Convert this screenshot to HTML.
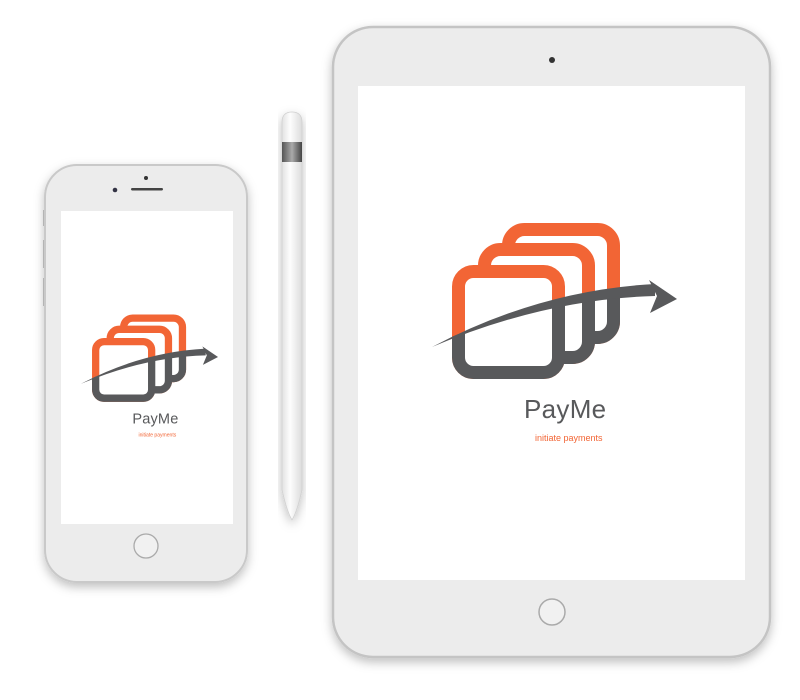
<!DOCTYPE html>
<html><head><meta charset="utf-8"><style>
html,body{margin:0;padding:0;background:#fff;width:800px;height:700px;overflow:hidden}
</style></head><body>
<svg width="800" height="700" viewBox="0 0 800 700" xmlns="http://www.w3.org/2000/svg">
<defs>
<linearGradient id="pen" x1="0" x2="1"><stop offset="0" stop-color="#e2e2e2"/><stop offset=".4" stop-color="#fdfdfd"/><stop offset="1" stop-color="#dcdcdc"/></linearGradient>
<linearGradient id="band" x1="0" x2="1"><stop offset="0" stop-color="#555"/><stop offset=".5" stop-color="#aaa"/><stop offset="1" stop-color="#444"/></linearGradient>
<filter id="sh" x="-20%" y="-20%" width="140%" height="140%"><feDropShadow dx="0" dy="4" stdDeviation="5" flood-color="#000" flood-opacity=".25"/></filter>
<clipPath id="below"><path d="M420,352 Q540,290 690,290 L690,420 L420,420 Z"/></clipPath>
<g id="sq">
<rect x="508.5" y="229.5" width="105" height="108" rx="16" fill="#fff" stroke-width="13"/>
<rect x="484.5" y="249.5" width="104" height="108" rx="16" fill="#fff" stroke-width="13"/>
<rect x="458.5" y="271.5" width="100" height="101" rx="15" fill="#fff" stroke-width="13"/>
</g>
<g id="logo">
<use href="#sq" stroke="#f26535"/>
<g clip-path="url(#below)"><use href="#sq" stroke="#58595b"/></g>
<path d="M432,347 Q540,290 655,284 L655,296 Q545,299 432,347 Z" fill="#58595b"/>
<path d="M649,280 L677,299 L650,313 L657,296 Z" fill="#58595b"/>
</g>
</defs>

<!-- iPhone -->
<rect x="43" y="210" width="3" height="16" fill="#ccc"/>
<rect x="43" y="240" width="3" height="28" fill="#ccc"/>
<rect x="43" y="278" width="3" height="28" fill="#ccc"/>
<rect x="45" y="165" width="202" height="417" rx="32" fill="#ececec" stroke="#c9c9c9" stroke-width="2" filter="url(#sh)"/>
<rect x="61" y="211" width="172" height="313" fill="#fff"/>
<circle cx="146" cy="178" r="2" fill="#333"/>
<circle cx="115" cy="190" r="2.3" fill="#334"/>
<rect x="131" y="188" width="32" height="2.5" rx="1.2" fill="#444"/>
<circle cx="146" cy="546" r="12" fill="#f1f1f1" stroke="#aaa" stroke-width="1.3"/>
<g transform="translate(-161.1,189.6) scale(0.56)">
<use href="#logo"/>
<text x="524" y="418" font-family="Liberation Sans, sans-serif" font-size="26" fill="#58595b" letter-spacing=".3">PayMe</text>
<text x="535" y="441" font-family="Liberation Sans, sans-serif" font-size="9" fill="#f26535">initiate payments</text>
</g>

<!-- Pencil -->
<path d="M282,122 Q282,112 292,112 Q302,112 302,122 L302,490 Q297,512 292,520 Q287,512 282,490 Z" fill="url(#pen)" stroke="#d0d0d0" stroke-width=".8" filter="url(#sh)"/>
<rect x="282" y="142" width="20" height="20" fill="url(#band)"/>

<!-- iPad -->
<rect x="333" y="27" width="437" height="630" rx="40" fill="#ececec" stroke="#c4c4c4" stroke-width="2.5" filter="url(#sh)"/>
<rect x="358" y="86" width="387" height="494" fill="#fff"/>
<circle cx="552" cy="60" r="3" fill="#333"/>
<circle cx="552" cy="612" r="13" fill="#f1f1f1" stroke="#aaa" stroke-width="1.5"/>
<use href="#logo"/>
<text x="524" y="418" font-family="Liberation Sans, sans-serif" font-size="26" fill="#58595b" letter-spacing=".3">PayMe</text>
<text x="535" y="441" font-family="Liberation Sans, sans-serif" font-size="9" fill="#f26535">initiate payments</text>
</svg>
</body></html>
